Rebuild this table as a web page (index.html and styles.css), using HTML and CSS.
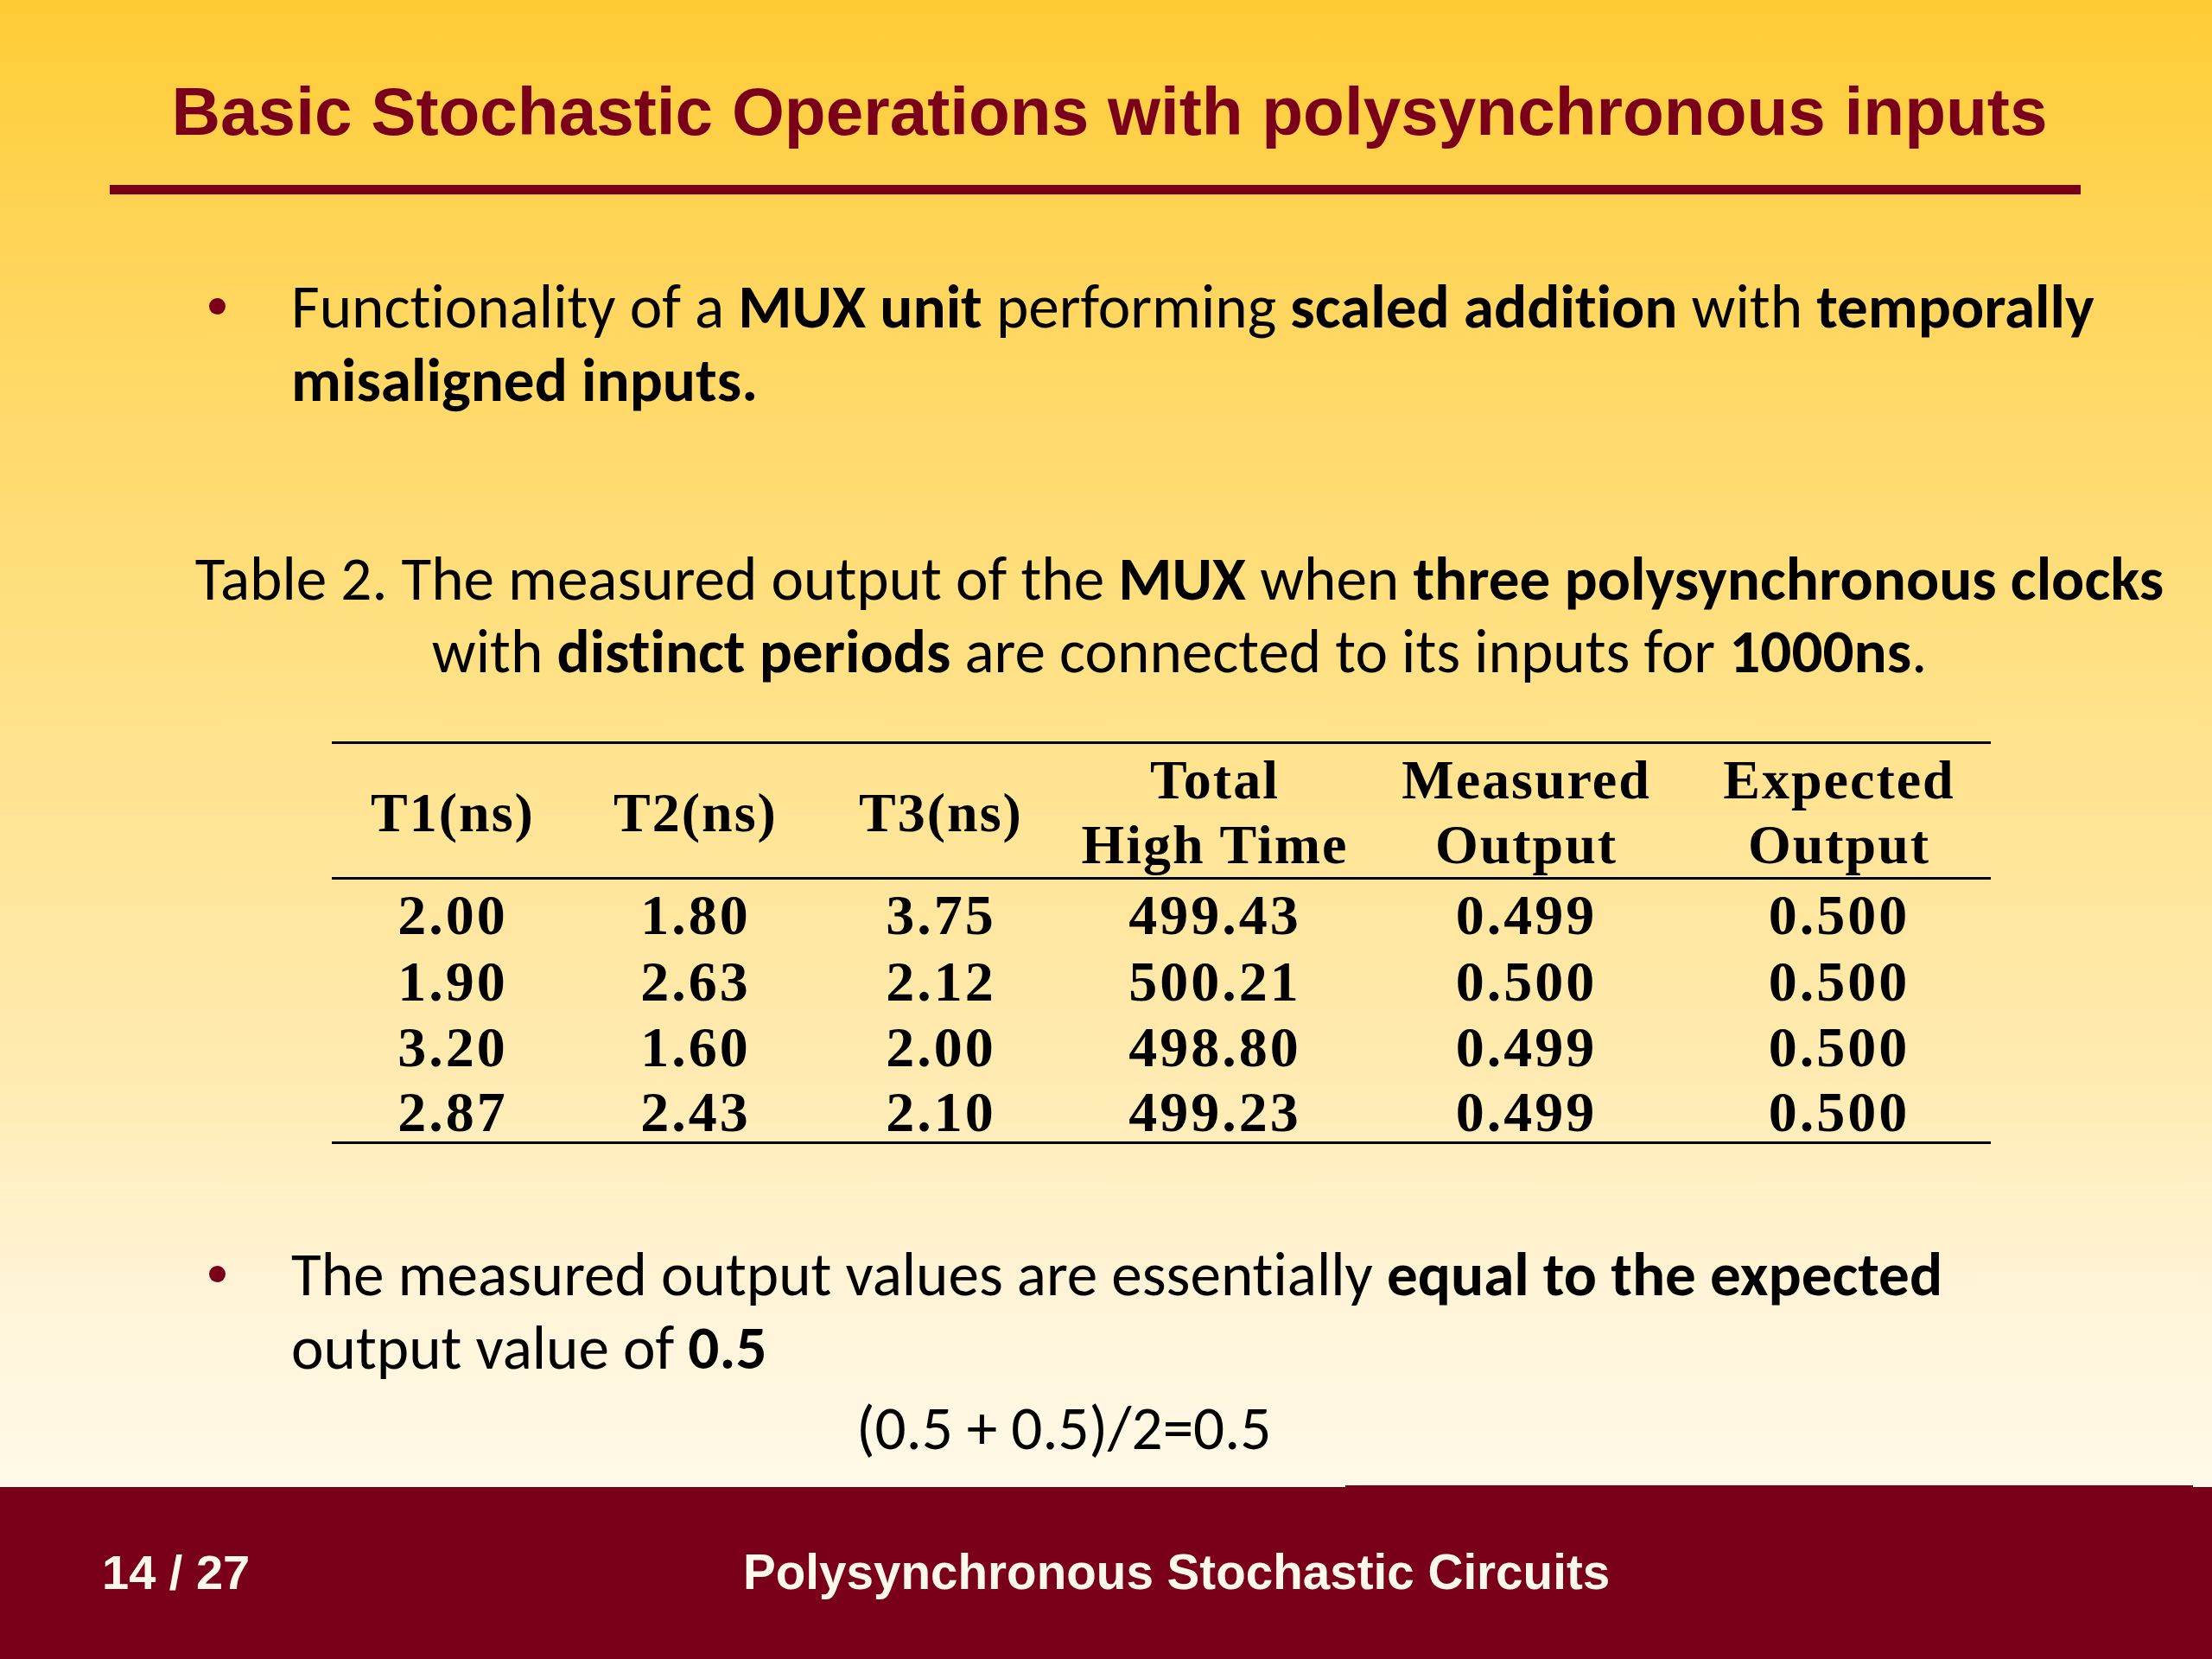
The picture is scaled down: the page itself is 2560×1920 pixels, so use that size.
FILE: index.html
```html
<!DOCTYPE html>
<html lang="en">
<head>
<meta charset="utf-8">
<title>Basic Stochastic Operations with polysynchronous inputs</title>
<link rel="stylesheet" href="styles.css">
</head>
<body>
<div class="slide">
  <header class="head">
    <h1 class="title">Basic Stochastic Operations with polysynchronous inputs</h1>
    <div class="rule"></div>
  </header>
  <main class="content">
    <ul class="bullets first">
      <li>Functionality of a <b>MUX unit</b> performing <b>scaled addition</b> with <b>temporally</b><br><b>misaligned inputs.</b></li>
    </ul>
    <p class="caption">Table 2. The measured output of the <b>MUX</b> when <b>three polysynchronous clocks</b><br>with <b>distinct periods</b> are connected to its inputs for <b>1000ns</b>.</p>
    <table class="data">
      <colgroup>
        <col class="c1"><col class="c2"><col class="c3"><col class="c4"><col class="c5"><col class="c6">
      </colgroup>
      <thead>
        <tr>
          <th>T1(ns)</th>
          <th>T2(ns)</th>
          <th>T3(ns)</th>
          <th>Total<br>High Time</th>
          <th>Measured<br>Output</th>
          <th>Expected<br>Output</th>
        </tr>
      </thead>
      <tbody>
        <tr><td>2.00</td><td>1.80</td><td>3.75</td><td>499.43</td><td>0.499</td><td>0.500</td></tr>
        <tr><td>1.90</td><td>2.63</td><td>2.12</td><td>500.21</td><td>0.500</td><td>0.500</td></tr>
        <tr><td>3.20</td><td>1.60</td><td>2.00</td><td>498.80</td><td>0.499</td><td>0.500</td></tr>
        <tr><td>2.87</td><td>2.43</td><td>2.10</td><td>499.23</td><td>0.499</td><td>0.500</td></tr>
      </tbody>
    </table>
    <ul class="bullets second">
      <li>The measured output values are essentially <b>equal to the expected</b><br>output value of <b>0.5</b></li>
    </ul>
    <p class="formula">(0.5 + 0.5)/2=0.5</p>
  </main>
  <footer class="foot">
    <span class="page">14 / 27</span>
    <span class="foot-title">Polysynchronous Stochastic Circuits</span>
  </footer>
</div>
</body>
</html>
```
FILE: styles.css
```css
html, body {
  margin: 0;
  padding: 0;
}

body {
  width: 2560px;
  height: 1920px;
  overflow: hidden;
}

.slide {
  width: 2560px;
  height: 1920px;
  display: flex;
  flex-direction: column;
  background: linear-gradient(to bottom,
    #FFCC35 0px,
    #FFD55A 300px,
    #FFE083 750px,
    #FFEBB2 1250px,
    #FFF4D8 1500px,
    #FFF9E7 1720px);
  font-family: Carlito, Calibri, "Open Sans", sans-serif;
  font-variant-ligatures: none;
  color: #000;
}

.head {
  padding-top: 81px;
}

.title {
  margin: 0;
  padding-left: 8px;
  font-family: "Liberation Sans", Arial, sans-serif;
  font-weight: bold;
  font-size: 78.3px;
  line-height: 96px;
  color: #7A0019;
  text-align: center;
}

.rule {
  margin: 37px 152px 0 127px;
  height: 11px;
  background: #7A0019;
}

.content {
  flex: 1;
  display: flex;
  flex-direction: column;
}

.bullets {
  list-style: none;
  margin: 0;
  padding: 0;
  font-size: 71.2px;
  line-height: 85px;
}

.bullets li {
  position: relative;
  padding-left: 337px;
}

.bullets li::before {
  content: "";
  position: absolute;
  left: 242px;
  top: 33px;
  width: 19px;
  height: 19px;
  border-radius: 50%;
  background: #7A0019;
}

.first {
  margin-top: 87px;
}

.caption {
  margin: 146px 0 0 170px;
  font-size: 71.2px;
  line-height: 84px;
  text-align: center;
}

.data {
  margin: 62px 0 0 384px;
  width: 1920px;
  border-collapse: collapse;
  table-layout: fixed;
  font-family: "Liberation Serif", "Times New Roman", serif;
  font-weight: bold;
}

.c1 { width: 280px; }
.c2 { width: 282px; }
.c3 { width: 286px; }
.c4 { width: 348px; }
.c5 { width: 373px; }
.c6 { width: 351px; }

.data thead tr {
  border-top: 3px solid #000;
  border-bottom: 3px solid #000;
}

.data tbody tr:last-child {
  border-bottom: 3px solid #000;
}

.data th {
  padding: 4px 0 0 0;
  font-weight: bold;
  font-size: 64px;
  letter-spacing: 2px;
  line-height: 75px;
  height: 145px;
  vertical-align: middle;
  text-align: center;
}

.data td {
  padding: 5px 0 0 0;
  font-size: 66px;
  letter-spacing: 3px;
  line-height: 71.5px;
  text-align: center;
}

.data tbody tr:last-child td {
  line-height: 68px;
}

.second {
  margin-top: 108px;
}

.formula {
  margin: 8px 0 0 991px;
  font-size: 71.2px;
  line-height: 85px;
}

.foot {
  position: relative;
  height: 199px;
  box-sizing: border-box;
  padding: 71px 0 0 118px;
  background: #7A0019;
  color: #FFF9EC;
  font-family: "Liberation Sans", Arial, sans-serif;
  font-weight: bold;
  font-size: 56px;
  line-height: 56px;
  display: flex;
}

.foot-title {
  font-size: 56.6px;
}

.foot::before {
  content: "";
  position: absolute;
  left: 1557px;
  top: -2px;
  width: 981px;
  height: 2px;
  background: #7A0019;
}

.page {
  width: 742px;
  flex: none;
}
```
